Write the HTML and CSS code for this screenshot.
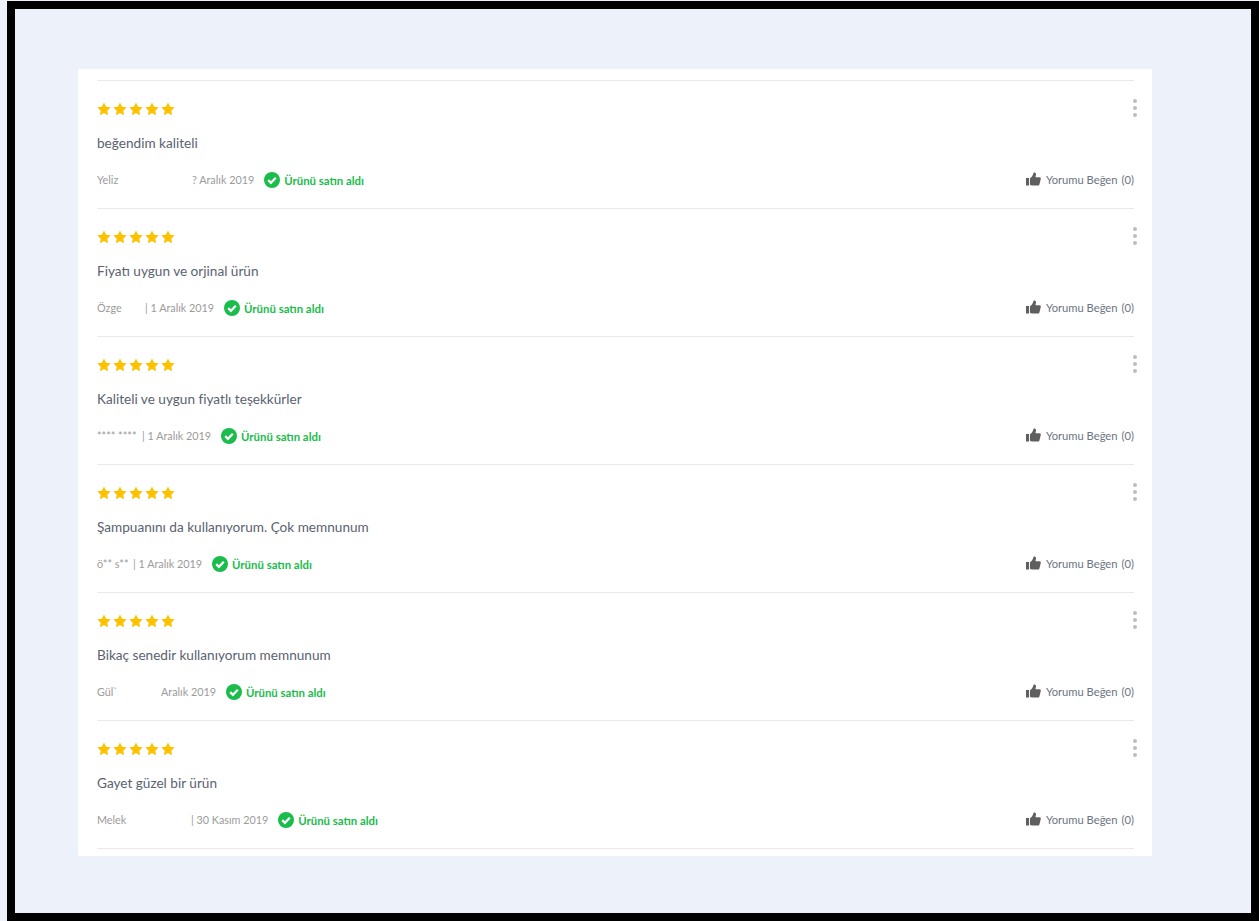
FILE: index.html
```html
<!DOCTYPE html>
<html lang="tr">
<head>
<meta charset="utf-8">
<title>Yorumlar</title>
<link rel="stylesheet" href="styles.css">
</head>
<body>
<svg class="defs" width="0" height="0" aria-hidden="true">
  <symbol id="star" viewBox="0 0 24 24"><path d="M12 .8l3.5 7.4 8 1-5.9 5.6 1.5 8.1L12 18.9l-7.1 4 1.5-8.1L.5 9.2l8-1z"/></symbol>
  <symbol id="check" viewBox="0 0 16 16"><circle cx="8" cy="8" r="8" fill="#1abc4b"/><path d="M4.2 8.2l2.7 2.6 4.9-5" fill="none" stroke="#fff" stroke-width="2.3"/></symbol>
  <symbol id="thumb" viewBox="0 0 16 14"><path d="M0 6h3.2v8H0zM4.2 6.2c1.6-1 3-2.6 3.4-4.6C7.8.6 8.2 0 9 0c1.3 0 1.9 1.2 1.6 2.7l-.5 2.3h4.4c1 0 1.5.8 1.3 1.7l-1.4 6c-.2.8-.8 1.3-1.6 1.3H6.6c-.9 0-1.5-.4-2.4-.8z"/></symbol>
</svg>
<div class="frame">
  <section class="card">
    <article class="review">
      <div class="top"><div class="stars"><svg><use href="#star"/></svg><svg><use href="#star"/></svg><svg><use href="#star"/></svg><svg><use href="#star"/></svg><svg><use href="#star"/></svg></div><div class="dots"><i></i><i></i><i></i></div></div>
      <p class="text">beğendim kaliteli</p>
      <div class="meta"><span class="name name-a">Yeliz</span><span class="date">? Aralık 2019</span><svg class="check"><use href="#check"/></svg><span class="bought">Ürünü satın aldı</span><span class="like"><svg class="thumb"><use href="#thumb"/></svg><span class="like-label">Yorumu Beğen</span><span>(0)</span></span></div>
    </article>
    <article class="review">
      <div class="top"><div class="stars"><svg><use href="#star"/></svg><svg><use href="#star"/></svg><svg><use href="#star"/></svg><svg><use href="#star"/></svg><svg><use href="#star"/></svg></div><div class="dots"><i></i><i></i><i></i></div></div>
      <p class="text">Fiyatı uygun ve orjinal ürün</p>
      <div class="meta"><span class="name name-b">Özge</span><span class="date">| 1 Aralık 2019</span><svg class="check"><use href="#check"/></svg><span class="bought">Ürünü satın aldı</span><span class="like"><svg class="thumb"><use href="#thumb"/></svg><span class="like-label">Yorumu Beğen</span><span>(0)</span></span></div>
    </article>
    <article class="review">
      <div class="top"><div class="stars"><svg><use href="#star"/></svg><svg><use href="#star"/></svg><svg><use href="#star"/></svg><svg><use href="#star"/></svg><svg><use href="#star"/></svg></div><div class="dots"><i></i><i></i><i></i></div></div>
      <p class="text">Kaliteli ve uygun fiyatlı teşekkürler</p>
      <div class="meta"><span class="name name-c">**** ****</span><span class="date">| 1 Aralık 2019</span><svg class="check"><use href="#check"/></svg><span class="bought">Ürünü satın aldı</span><span class="like"><svg class="thumb"><use href="#thumb"/></svg><span class="like-label">Yorumu Beğen</span><span>(0)</span></span></div>
    </article>
    <article class="review">
      <div class="top"><div class="stars"><svg><use href="#star"/></svg><svg><use href="#star"/></svg><svg><use href="#star"/></svg><svg><use href="#star"/></svg><svg><use href="#star"/></svg></div><div class="dots"><i></i><i></i><i></i></div></div>
      <p class="text">Şampuanını da kullanıyorum. Çok memnunum</p>
      <div class="meta"><span class="name name-d">ö** s**</span><span class="date">| 1 Aralık 2019</span><svg class="check"><use href="#check"/></svg><span class="bought">Ürünü satın aldı</span><span class="like"><svg class="thumb"><use href="#thumb"/></svg><span class="like-label">Yorumu Beğen</span><span>(0)</span></span></div>
    </article>
    <article class="review">
      <div class="top"><div class="stars"><svg><use href="#star"/></svg><svg><use href="#star"/></svg><svg><use href="#star"/></svg><svg><use href="#star"/></svg><svg><use href="#star"/></svg></div><div class="dots"><i></i><i></i><i></i></div></div>
      <p class="text">Bikaç senedir kullanıyorum memnunum</p>
      <div class="meta"><span class="name name-e">Gül`</span><span class="date">Aralık 2019</span><svg class="check"><use href="#check"/></svg><span class="bought">Ürünü satın aldı</span><span class="like"><svg class="thumb"><use href="#thumb"/></svg><span class="like-label">Yorumu Beğen</span><span>(0)</span></span></div>
    </article>
    <article class="review">
      <div class="top"><div class="stars"><svg><use href="#star"/></svg><svg><use href="#star"/></svg><svg><use href="#star"/></svg><svg><use href="#star"/></svg><svg><use href="#star"/></svg></div><div class="dots"><i></i><i></i><i></i></div></div>
      <p class="text">Gayet güzel bir ürün</p>
      <div class="meta"><span class="name name-f">Melek</span><span class="date">| 30 Kasım 2019</span><svg class="check"><use href="#check"/></svg><span class="bought">Ürünü satın aldı</span><span class="like"><svg class="thumb"><use href="#thumb"/></svg><span class="like-label">Yorumu Beğen</span><span>(0)</span></span></div>
    </article>
  </section>
</div>
</body>
</html>
```
FILE: styles.css
```css
* { box-sizing: border-box; }
html, body { margin: 0; height: 921px; overflow: hidden; }
body {
  padding: 1px 0 0 7px;
  background: #edf2fa;
  font-family: "Lato", "Noto Sans", sans-serif;
}
.defs { display: block; height: 0; }
.frame {
  width: 1252px;
  height: 920px;
  border: 8px solid #000;
  padding: 60px 99px 57px 63px;
  background: #edf2fa;
}
.card {
  height: 787px;
  background: #fff;
  padding: 11px 18px 0 19px;
  overflow: hidden;
}
.review {
  height: 128px;
  border-top: 1px solid #e9e9e9;
  padding-top: 20px;
}
.review:last-child { height: 129px; border-bottom: 1px solid #e9e9e9; }
.top { display: flex; justify-content: space-between; height: 16px; }
.stars { display: flex; gap: 2px; }
.stars svg { width: 14px; height: 14px; margin-top: 1px; fill: #ffc000; }
.dots { display: flex; flex-direction: column; gap: 3px; margin: -2px -3px 0 0; }
.dots i { display: block; width: 4px; height: 4px; border-radius: 50%; background: #bdbdbd; }
.text { margin: 14px 0 0; font-size: 13.6px; line-height: 24px; color: #5a6270; white-space: nowrap; }
.meta { display: flex; align-items: center; height: 20px; margin-top: 14px; font-size: 10.8px; color: #9b9b9b; white-space: nowrap; }
.name { flex: none; }
.name-a { width: 95px; }
.name-b { width: 48px; }
.name-c { width: 45px; }
.name-d { width: 36px; }
.name-e { width: 64px; }
.name-f { width: 94px; }
.date { flex: none; }
.check { width: 16px; height: 16px; margin: 2px 4px 0 10px; flex: none; }
.bought { margin-top: 2px; font-size: 11.4px; font-weight: 700; color: #1abc4b; }
.like { display: flex; align-items: center; margin-left: auto; font-size: 11.2px; color: #6b7480; }
.thumb { width: 15px; height: 14px; margin-right: 5px; fill: #5f5f5f; }
.like-label { margin-right: 4px; }
```
